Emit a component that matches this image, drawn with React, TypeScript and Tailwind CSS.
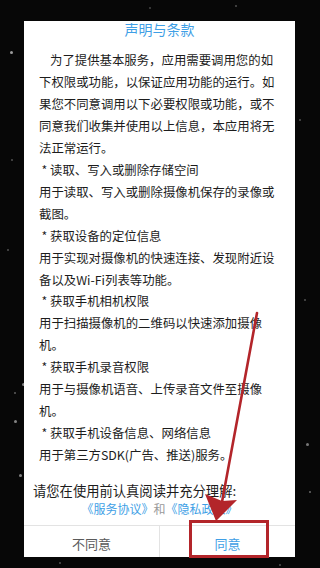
import React from "react";

const stars: [number, number, number, number][] = [
  [11, 52, 1.5, 0.6],
  [23, 384, 1.5, 0.5],
  [15, 393, 1, 0.35],
  [15, 421, 1.5, 0.5],
  [307, 444, 1.5, 0.45],
  [20, 475, 1.5, 0.5],
  [310, 492, 1, 0.4],
  [236, 6, 1, 0.3],
  [300, 120, 1, 0.3],
  [8, 250, 1, 0.3],
  [305, 300, 1, 0.3],
  [60, 563, 1, 0.3],
  [280, 565, 1, 0.3],
  [150, 8, 1, 0.25],
  [12, 160, 1, 0.3],
];

const Star = ({ children }: { children: React.ReactNode }) => (
  <div className="whitespace-nowrap">
    <span className="inline-block w-[11px] text-center">*</span>
    {children}
  </div>
);

const L = ({ children, cls = "" }: { children: React.ReactNode; cls?: string }) => (
  <div className={"whitespace-nowrap " + cls}>{children}</div>
);

export default function App() {
  return (
    <div
      className="relative w-[320px] h-[568px] overflow-hidden bg-[#070707]"
      style={{ fontFamily: '"Noto Sans CJK SC", "Noto Sans", sans-serif' }}
    >
      {stars.map(([x, y, r, o], i) => (
        <div
          key={i}
          className="absolute rounded-full bg-white"
          style={{ left: x - r, top: y - r, width: r * 2, height: r * 2, opacity: o }}
        />
      ))}

      <div className="pt-[21px] pl-[24px]">
        <div className="w-[271px] h-[536px] bg-white flex flex-col">
          <div className="text-center text-[14px] leading-[16px] text-[#3f9fe6]">声明与条款</div>

          <div className="mt-[13px] pl-[15px] text-[12.4px] leading-[21.95px] text-[#1c1c1c]">
            <L cls="pl-[11px]">为了提供基本服务，应用需要调用您的如</L>
            <L>下权限或功能，以保证应用功能的运行。如</L>
            <L>果您不同意调用以下必要权限或功能，或不</L>
            <L>同意我们收集并使用以上信息，本应用将无</L>
            <L>法正常运行。</L>
            <Star>读取、写入或删除存储空间</Star>
            <L>用于读取、写入或删除摄像机保存的录像或</L>
            <L>截图。</L>
            <Star>获取设备的定位信息</Star>
            <L>用于实现对摄像机的快速连接、发现附近设</L>
            <L>备以及Wi-Fi列表等功能。</L>
            <Star>获取手机相机权限</Star>
            <L>用于扫描摄像机的二维码以快速添加摄像</L>
            <L>机。</L>
            <Star>获取手机录音权限</Star>
            <L>用于与摄像机语音、上传录音文件至摄像</L>
            <L>机。</L>
            <Star>获取手机设备信息、网络信息</Star>
            <L>用于第三方SDK(广告、推送)服务。</L>
          </div>

          <div className="mt-[15px] pl-[9px] text-[13.3px] leading-[18px] text-[#1c1c1c] whitespace-nowrap">
            请您在使用前认真阅读并充分理解:
          </div>
          <div className="text-center text-[12px] leading-[18px] whitespace-nowrap">
            <span className="text-[#3f9fe6]">《服务协议》</span>
            <span className="text-[#9a9a9a]">和</span>
            <span className="text-[#3f9fe6]">《隐私政策》</span>
          </div>

          <div className="mt-[7px] flex-1 flex border-t border-[#e3e3e3]">
            <div className="flex-1 pt-[8px] text-center text-[13px] leading-[20px] text-[#5a5a5a]">不同意</div>
            <div className="w-px bg-[#e3e3e3]" />
            <div className="flex-1 pt-[8px] text-center text-[13px] leading-[20px] text-[#3f9fe6]">同意</div>
          </div>
        </div>
      </div>

      <svg className="absolute inset-0 pointer-events-none" width="320" height="568" viewBox="0 0 320 568">
        <line x1="257" y1="313" x2="222" y2="502" stroke="#b3252a" strokeWidth="2.6" strokeLinecap="round" />
        <polygon points="216,521 205,494 222,501 237,500" fill="#b3252a" />
        <rect x="190.5" y="521.5" width="77" height="35" fill="none" stroke="#b3252a" strokeWidth="3" />
      </svg>
    </div>
  );
}
